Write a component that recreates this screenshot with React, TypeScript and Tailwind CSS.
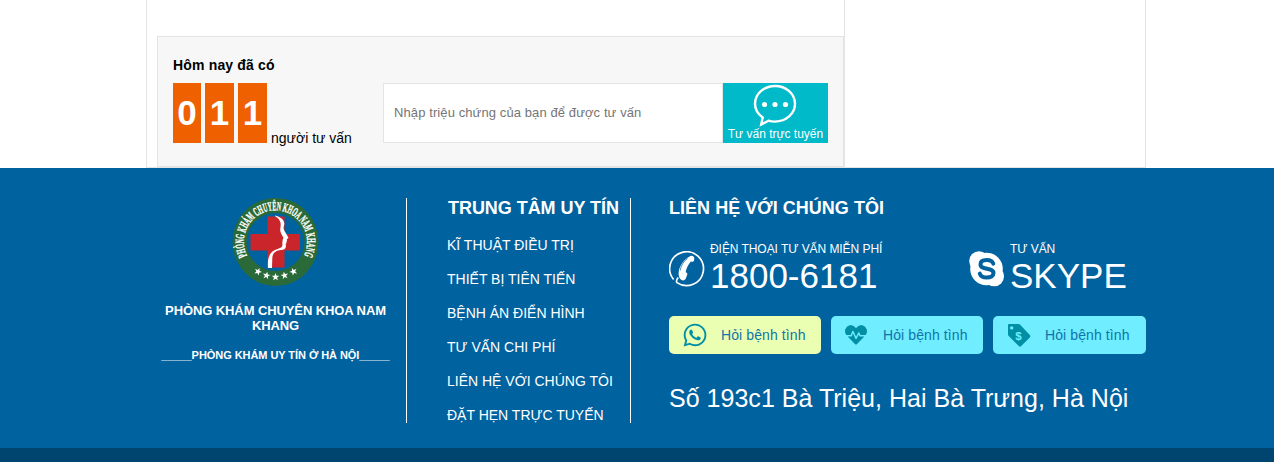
import { FaWhatsapp, FaHeartbeat } from "react-icons/fa";

const menu = [
  "KĨ THUẬT ĐIỀU TRỊ",
  "THIẾT BỊ TIÊN TIẾN",
  "BỆNH ÁN ĐIỂN HÌNH",
  "TƯ VẤN CHI PHÍ",
  "LIÊN HỆ VỚI CHÚNG TÔI",
  "ĐẶT HẸN TRỰC TUYẾN",
];

function ChatIcon() {
  return (
    <svg className="mr-[2px] h-[43px] w-[44px] shrink-0" viewBox="0 0 44 43" fill="none">
      <path
        d="M9.700 33.500C4.800 30 2 25 2 19.800C2 9.800 11 2 22 2s20 7.800 20 17.800S33 37.600 22 37.600c-2.500 0-4.500-.3-6.500-.9L8.200 40.600z"
        stroke="white"
        strokeWidth="2.400"
      />
      <circle cx="11.500" cy="20.500" r="2.600" fill="white" />
      <circle cx="22" cy="20.500" r="2.600" fill="white" />
      <circle cx="32.500" cy="20.500" r="2.600" fill="white" />
    </svg>
  );
}

function PhoneIcon() {
  return (
    <svg className="h-9 w-9" viewBox="0 0 36 36" fill="none">
      <path
        d="M4.600 28.500A16.900 16.900 0 1 1 8 31.600c-1-1-.2-3.200 1.200-5"
        stroke="white"
        strokeWidth="1.700"
      />
      <path
        d="M21 5.200c2.200-1 4.200.2 4.300 2.300l-.3 2.300c-.4 1.100-1.700 1.200-3.100.7c-2.800 3.200-4.700 7-5.200 10.700c1.600.4 2 1.300 1.500 2.600l-1.300 3.500c-.8 2-2.800 2.900-4.700 1.500c-2-1.600-3-4.300-2.500-7.800c.8-6.500 5.500-13.200 11.300-15.800z"
        fill="white"
      />
      <path d="M11.200 19.500c.8-5 3.500-9.300 7.300-12" stroke="#00629f" strokeWidth=".7" />
    </svg>
  );
}

function SkypeIcon() {
  return (
    <svg className="h-9 w-9" viewBox="0 0 36 36">
      <g fill="white">
        <circle cx="17.500" cy="18" r="16.300" />
        <circle cx="10" cy="10" r="9.800" />
        <circle cx="25.200" cy="25.500" r="9.800" />
      </g>
      <path
        d="M24.300 12.600c-1-2.600-3.400-3.500-6.500-3.500c-3.700 0-6.300 1.500-6.300 4.300c0 6 13 2.700 13 8.700c0 3-3 4.500-6.700 4.500c-3.500 0-6-1.200-7-4"
        fill="none"
        stroke="#00629f"
        strokeWidth="4"
        strokeLinecap="round"
      />
    </svg>
  );
}

function TagIcon() {
  return (
    <svg className="h-6 w-6" viewBox="0 0 24 24">
      <path
        fillRule="evenodd"
        d="M2 1h9.500q1 0 1.700.7l9.600 10.300q1 1.200 0 2.400l-8.600 8.700q-1.200 1.200-2.400 0L1.700 13q-.7-.7-.7-1.700V2q0-1 1-1zm2.700 2.200a1.700 1.700 0 1 0 0 3.400a1.700 1.700 0 0 0 0-3.400z"
        fill="#008fa5"
      />
      <text
        x="11.500"
        y="16.500"
        textAnchor="middle"
        fontSize="11.500"
        fontWeight="700"
        fontFamily="Liberation Sans, sans-serif"
        fill="#70edff"
      >
        $
      </text>
    </svg>
  );
}

const star = "M0-3.600L.9-1.100L3.500-1.100L1.400.5L2.200 3L0 1.500L-2.200 3L-1.400.5L-3.500-1.100L-.9-1.100z";

function Logo() {
  return (
    <svg className="h-[90px] w-[90px]" viewBox="0 0 90 90">
      <defs>
        <path id="ring" d="M16 57.700A31.600 31.600 0 1 1 68 65" />
      </defs>
      <ellipse cx="44.500" cy="44" rx="43" ry="44" fill="#2a6a38" />
      <circle cx="44.500" cy="44" r="29" fill="#00629f" />
      <path d="M36.500 18.500h17v17.500H69v16.500H53.500v17h-17v-17H19.500V36h17z" fill="#c9252b" />
      <path
        transform="translate(0 -1)"
        d="M44 18.500c4.500 1.200 8 3.300 9 6.500c1 3-1 4.500-.3 7c.6 2.500 3.300 5.500 4.600 8.500c.5 1.200-1.800 1.500-1.500 2.500c.5 1 0 1.500-.5 2c.5 1 0 1.500-.6 2c.8 4.500-.7 6-4.700 6c-5 .5-8.500 3-8.700 8l-.3 10h-4c-.7-9 1-15.500 7-18c2.500-1.200 5.500-1.700 6.700-3c1.200-1.500.5-3 .6-4.500c0-1 .5-1.300.3-2.300c0-1 1.200-1.500.7-2.700c-1.800-3.500-3.500-5.500-3-9c.4-3 .8-5-.5-7.500c-.8-2-2.500-3.500-4.800-5z"
        fill="white"
      />
      <text fontFamily="Liberation Serif, serif" fontSize="12.500" fontWeight="700" fill="white" stroke="white" strokeWidth=".4">
        <textPath href="#ring" textLength="127" lengthAdjust="spacingAndGlyphs">
          PHÒNG KHÁM CHUYÊN KHOA NAM KHANG
        </textPath>
      </text>
      <g fill="white">
        <path d={star} transform="translate(27 73.500) rotate(25) scale(1.1)" />
        <path d={star} transform="translate(35.500 77.500) rotate(12) scale(1.1)" />
        <path d={star} transform="translate(44.500 79) scale(1.1)" />
        <path d={star} transform="translate(53.500 77.500) rotate(-12) scale(1.1)" />
        <path d={star} transform="translate(62.500 73.500) rotate(-25) scale(1.1)" />
      </g>
    </svg>
  );
}

export default function App() {
  return (
    <div className="h-[462px] w-[1274px] overflow-hidden bg-white font-['Liberation_Sans',Arial,sans-serif] text-sm text-black">
      <div className="ml-[146px] flex h-[168px] w-[1000px] border-r border-b border-l border-[#e4e4e4]">
        <div className="flex h-[167px] w-[698px] items-end border-r border-[#e4e4e4] pl-[10px]">
          <section className="flex h-[131px] w-[687px] border border-[#e4e4e4] bg-[#f7f7f7] pt-5 pl-[15px]">
            <div className="w-[210px]">
              <h3 className="h-[26px] leading-4 font-bold tracking-[0.17px]">Hôm nay đã có</h3>
              <div className="flex items-end gap-1">
                <span className="h-[60px] w-7 bg-[#ee6000] text-center text-[35px] leading-[59px] font-bold text-white">0</span>
                <span className="h-[60px] w-[29px] bg-[#ee6000] text-center text-[35px] leading-[59px] font-bold text-white">1</span>
                <span className="h-[60px] w-[29px] bg-[#ee6000] text-center text-[35px] leading-[59px] font-bold text-white">1</span>
                <span className="leading-[10px] whitespace-nowrap">người tư vấn</span>
              </div>
            </div>
            <form className="mt-[26px] flex h-[60px]">
              <input
                className="w-[340px] border border-[#e4e4e4] bg-white px-[10px] text-[13px] tracking-[0.1px] placeholder:text-[#757575]"
                placeholder="Nhập triệu chứng của bạn để được tư vấn"
              />
              <button
                type="button"
                className="flex w-[105px] flex-col items-center bg-[#00b9c9] pt-px text-xs leading-[14px] whitespace-nowrap text-white"
              >
                <ChatIcon />
                Tư vấn trực tuyến
              </button>
            </form>
          </section>
        </div>
      </div>

      <footer className="flex h-[280px] bg-[#00629f] pt-[30px] pl-[146px] text-white">
        <div className="flex h-[225px] w-[261px] flex-col items-center border-r border-white pr-px">
          <Logo />
          <h2 className="mt-[15px] w-[240px] text-center text-[13px] leading-[15px] font-bold tracking-[-0.1px]">
            PHÒNG KHÁM CHUYÊN KHOA NAM KHANG
          </h2>
          <p className="mt-[15px] text-[11px] leading-[14px] font-bold tracking-[-0.06px] whitespace-nowrap">
            _____PHÒNG KHÁM UY TÍN Ở HÀ NỘI_____
          </p>
        </div>

        <nav className="h-[225px] w-[224px] border-r border-white pl-10">
          <h2 className="h-[30px] pl-px text-lg leading-5 font-bold tracking-[-0.05px] whitespace-nowrap">TRUNG TÂM UY TÍN</h2>
          <ul>
            {menu.map((item) => (
              <li key={item} className="h-[34px] leading-[34px] whitespace-nowrap">
                {item}
              </li>
            ))}
          </ul>
        </nav>

        <div className="ml-[38px] w-[477px]">
          <h2 className="h-[43px] text-lg leading-5 font-bold tracking-[0.03px]">LIÊN HỆ VỚI CHÚNG TÔI</h2>
          <div className="flex h-[75px]">
            <div className="flex w-[300px] gap-[5px]">
              <div className="pt-[10px]">
                <PhoneIcon />
              </div>
              <div>
                <p className="pt-px text-xs leading-[14px] tracking-[-0.06px]">ĐIỆN THOẠI TƯ VẤN MIỄN PHÍ</p>
                <p className="text-[35px] leading-10">1800-6181</p>
              </div>
            </div>
            <div className="flex gap-[5px]">
              <div className="pt-[10px]">
                <SkypeIcon />
              </div>
              <div>
                <p className="pt-px text-xs leading-[14px] tracking-[-0.06px]">TƯ VẤN</p>
                <p className="text-[35px] leading-10">SKYPE</p>
              </div>
            </div>
          </div>
          <div className="flex gap-[10px] tracking-[0.1px] text-[#0f75a8]">
            <a className="flex h-[38px] w-[152px] items-center rounded-[5px] bg-[#ebffb2] pl-[13px]">
              <FaWhatsapp className="mr-[13px] h-[26px] w-[26px] text-[#008fa5]" />
              Hỏi bệnh tình
            </a>
            <a className="flex h-[38px] w-[152px] items-center rounded-[5px] bg-[#70edff] pl-[14px]">
              <FaHeartbeat className="mr-[16px] h-[22px] w-[22px] text-[#008fa5]" />
              Hỏi bệnh tình
            </a>
            <a className="flex h-[38px] w-[153px] items-center rounded-[5px] bg-[#70edff] pl-[14px]">
              <span className="mr-[14px]">
                <TagIcon />
              </span>
              Hỏi bệnh tình
            </a>
          </div>
          <p className="mt-7 text-[25px] leading-8 tracking-[0.02px] whitespace-nowrap">
            Số 193c1 Bà Triệu, Hai Bà Trưng, Hà Nội
          </p>
        </div>
      </footer>
      <div className="h-[14px] bg-[#00456f]" />
    </div>
  );
}
